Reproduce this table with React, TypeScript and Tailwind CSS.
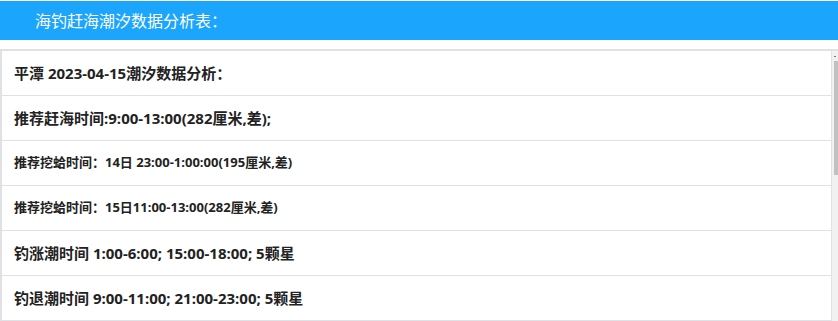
const rows: { text: string; small?: boolean }[] = [
  { text: "平潭 2023-04-15潮汐数据分析：" },
  { text: "推荐赶海时间:9:00-13:00(282厘米,差);" },
  { text: "推荐挖蛤时间：14日 23:00-1:00:00(195厘米,差)", small: true },
  { text: "推荐挖蛤时间：15日11:00-13:00(282厘米,差)", small: true },
  { text: "钓涨潮时间 1:00-6:00; 15:00-18:00; 5颗星" },
  { text: "钓退潮时间 9:00-11:00; 21:00-23:00; 5颗星" },
];

export default function App() {
  return (
    <main
      className="w-[838px] h-[321px] overflow-hidden bg-white"
      style={{ fontFamily: '"Open Sans", "Noto Sans CJK SC", sans-serif' }}
    >
      <div className="mt-px h-[39px] bg-[#1ca5fd] flex items-center pl-[35px] text-white text-[16px]">
        海钓赶海潮汐数据分析表：
      </div>

      <div className="mt-[9px] border-t-2 border-l-2 border-[#dfe1e5] flex">
        <ul className="flex-1 border-r border-[#dfe1e5]">
          {rows.map((r, i) => (
            <li
              key={i}
              className={
                "h-[45px] border-b border-[#dfe1e5] flex items-center pl-[12px] font-bold text-[#222] " +
                (r.small ? "text-[13px]" : "text-[15px]")
              }
            >
              {r.text}
            </li>
          ))}
        </ul>
        {/* scrollbar */}
        <div className="w-[6px] bg-[#f1f1f1] flex flex-col pl-[2px]">
          <div className="h-[10px] flex items-center">
            <div className="w-[2px] h-px bg-[#777]" />
          </div>
          <div className="h-[114px] bg-[#c1c1c1]" />
        </div>
      </div>
    </main>
  );
}
